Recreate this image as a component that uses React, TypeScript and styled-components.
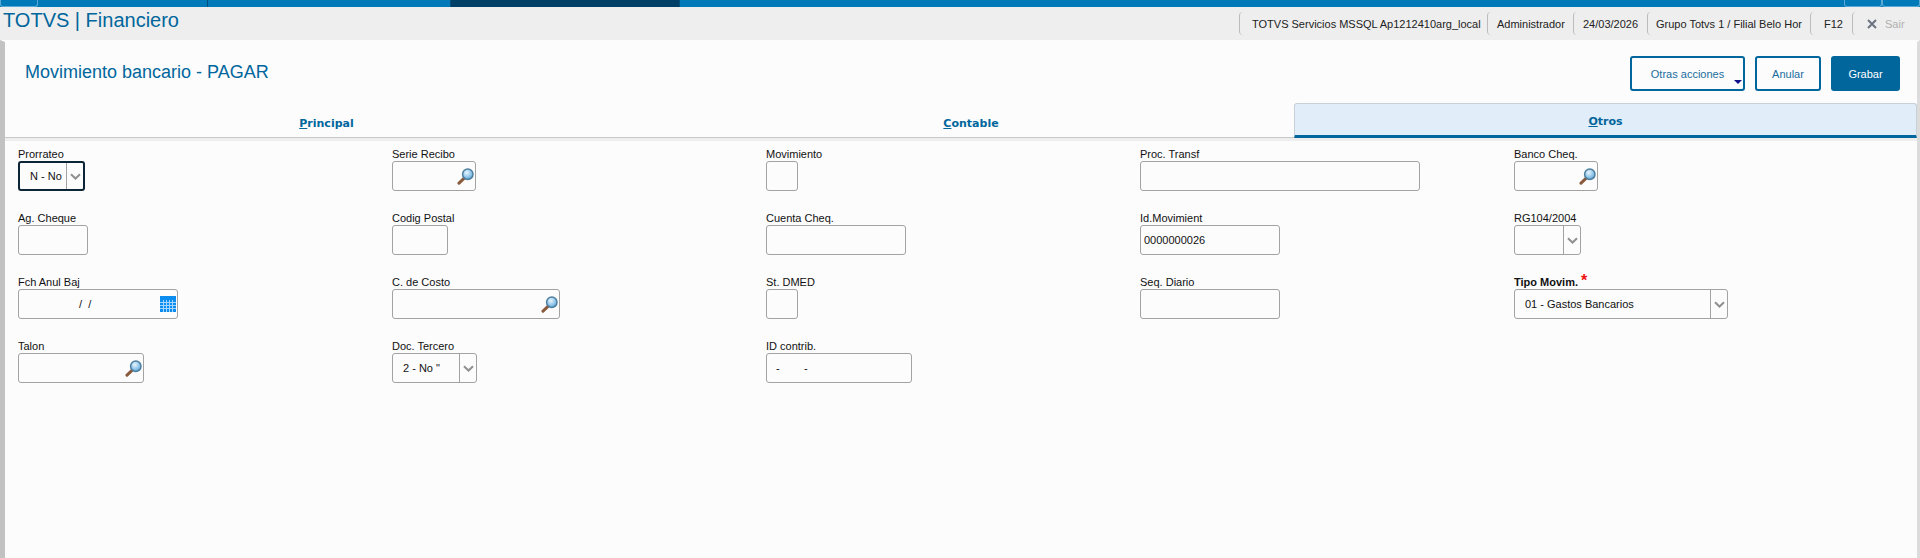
import styled, { createGlobalStyle } from "styled-components";

const GlobalStyle = createGlobalStyle`
  html, body {
    margin: 0;
    padding: 0;
    height: 100%;
    background: #eeeeee;
    font-family: "Liberation Sans", Arial, sans-serif;
    overflow: hidden;
  }
  #root { height: 100%; }
`;

const Page = styled.div`
  display: flex;
  flex-direction: column;
  height: 100%;
`;

const TopBar = styled.div`
  display: flex;
  height: 7px;
  flex-shrink: 0;
  background: #0079b8;
`;

const TopTab = styled.div<{ $width: number; $dark?: boolean; $light?: boolean }>`
  box-sizing: border-box;
  width: ${(p) => p.$width}px;
  background: ${(p) => (p.$dark ? "#003f66" : "#0079b8")};
  border-right: 1px solid ${(p) => (p.$light ? "#5aa9d6" : "#004f7c")};
  ${(p) => p.$light && "border-left: 1px solid #5aa9d6; border-bottom: 1px solid #5aa9d6; border-radius: 0 0 3px 3px;"}
`;

const TopSpacer = styled.div`
  flex: 1;
`;

const Header = styled.header`
  display: flex;
  justify-content: space-between;
  height: 33px;
  flex-shrink: 0;
  padding-left: 3px;
  background: #eeeeee;
`;

const Brand = styled.div`
  margin-top: 1px;
  font-size: 20px;
  line-height: 24px;
  color: #00669c;
`;

const Session = styled.div`
  display: flex;
  height: 23px;
  margin-top: 5px;
`;

const SessionItem = styled.div<{ $width: number; $pad: number }>`
  box-sizing: border-box;
  display: flex;
  align-items: center;
  width: ${(p) => p.$width}px;
  padding-left: ${(p) => p.$pad}px;
  border-left: 1px solid #bbbbbb;
  border-radius: 4px 0 0 4px;
  font-size: 11px;
  color: #222222;
  white-space: nowrap;
`;

const SairText = styled.span`
  margin-left: 8px;
  color: #b0b0b0;
`;

const Panel = styled.main`
  flex: 1;
  display: flex;
  flex-direction: column;
  background: #fcfcfc;
  border-top: 2px solid #fcfcfc;
  border-left: 5px solid #c2c2c2;
  border-right: 3px solid #dcdcdc;
`;

const TitleRow = styled.div`
  display: flex;
  justify-content: space-between;
  height: 61px;
  flex-shrink: 0;
  padding: 14px 17px 0 20px;
  box-sizing: border-box;
`;

const Title = styled.h1`
  margin: 5px 0 0;
  font-size: 18px;
  line-height: 22px;
  font-weight: 400;
  color: #00669c;
`;

const Actions = styled.div`
  display: flex;
  gap: 10px;
`;

const ActionButton = styled.button<{ $width: number; $primary?: boolean }>`
  position: relative;
  box-sizing: border-box;
  width: ${(p) => p.$width}px;
  height: 35px;
  padding: 0;
  border: 2px solid #00669c;
  border-radius: 3px;
  background: ${(p) => (p.$primary ? "#00669c" : "#fcfcfc")};
  color: ${(p) => (p.$primary ? "#ffffff" : "#1a6d9e")};
  font-family: "Liberation Sans", Arial, sans-serif;
  font-size: 11px;
`;

const Caret = styled.span`
  position: absolute;
  right: 1px;
  bottom: 5px;
  width: 0;
  height: 0;
  border-left: 4px solid transparent;
  border-right: 4px solid transparent;
  border-top: 4px solid #10108a;
`;

const Tabs = styled.nav`
  display: flex;
  height: 35px;
  flex-shrink: 0;
  box-sizing: border-box;
  border-bottom: 1px solid #c8c8c8;
`;

const Tab = styled.div<{ $width: number; $active?: boolean }>`
  box-sizing: border-box;
  display: flex;
  align-items: center;
  justify-content: center;
  width: ${(p) => p.$width}px;
  padding-top: ${(p) => (p.$active ? 4 : 7)}px;
  font-family: "DejaVu Sans", Verdana, sans-serif;
  font-size: 11px;
  font-weight: 700;
  color: #00669c;
  ${(p) =>
    p.$active &&
    `
    height: 35px;
    background: #e1edf9;
    border: 1px solid #c8d0d8;
    border-bottom: 3px solid #00669c;
    border-radius: 3px 3px 0 0;
  `}
`;

const FormStrip = styled.div`
  height: 3px;
  flex-shrink: 0;
  background: #eeeeee;
`;

const Form = styled.section`
  display: grid;
  grid-template-columns: repeat(5, 374px);
  grid-auto-rows: 44px;
  row-gap: 20px;
  padding: 6px 0 0 13px;
`;

const Field = styled.div`
  display: flex;
  flex-direction: column;
`;

const Label = styled.label<{ $required?: boolean }>`
  height: 14px;
  font-size: 11px;
  line-height: 14px;
  color: #111111;
  font-weight: ${(p) => (p.$required ? 700 : 400)};
  white-space: nowrap;
`;

const Star = styled.span`
  margin-left: 3px;
  font-size: 16px;
  line-height: 10px;
  font-weight: 700;
  color: #f01010;
`;

const Box = styled.div<{ $width: number; $focus?: boolean }>`
  box-sizing: border-box;
  display: flex;
  align-items: center;
  justify-content: space-between;
  width: ${(p) => p.$width}px;
  height: 30px;
  border: ${(p) => (p.$focus ? "2px solid #0b2536" : "1px solid #a3a3a3")};
  border-radius: 3px;
  background: #fcfcfc;
  font-size: 11px;
  color: #111111;
`;

const Value = styled.span<{ $pad: number }>`
  padding-left: ${(p) => p.$pad}px;
  white-space: pre;
`;

const ArrowCell = styled.span`
  box-sizing: border-box;
  display: flex;
  align-items: center;
  justify-content: center;
  flex-shrink: 0;
  width: 17px;
  height: 100%;
  border-left: 1px solid #a3a3a3;
`;

const IconSlot = styled.span`
  display: flex;
  margin-right: 1px;
`;

const Chevron = () => (
  <svg width="11" height="7" viewBox="0 0 11 7">
    <path d="M1 1.2 L5.5 5.5 L10 1.2" fill="none" stroke="#909090" strokeWidth="2" />
  </svg>
);

const Magnifier = () => (
  <svg width="17" height="17" viewBox="0 0 17 17">
    <defs>
      <radialGradient id="lens" cx="0.4" cy="0.35" r="0.7">
        <stop offset="0" stopColor="#e8f6ff" />
        <stop offset="1" stopColor="#5aa6dc" />
      </radialGradient>
    </defs>
    <path d="M7 10.4 L2 15.2" stroke="#8a5a3c" strokeWidth="3" strokeLinecap="round" />
    <circle cx="10.8" cy="6.2" r="5.2" fill="url(#lens)" stroke="#4f7f9f" strokeWidth="1.5" />
  </svg>
);

const Calendar = () => (
  <svg width="16" height="16" viewBox="0 0 16 16">
    <rect width="16" height="16" fill="#0a8cf0" />
    <path
      d="M0 6.5H16M0 9.5H16M0 12.5H16M3.5 4V16M6.5 4V16M9.5 4V16M12.5 4V16"
      stroke="#a8d6fa"
      strokeWidth="1"
    />
  </svg>
);

const CloseMark = () => (
  <svg width="10" height="10" viewBox="0 0 10 10">
    <path d="M1 1 L9 9 M9 1 L1 9" stroke="#6a7480" strokeWidth="2" />
  </svg>
);

type FieldKind = "text" | "search" | "select" | "date";

interface FieldDef {
  label: string;
  width: number;
  kind?: FieldKind;
  value?: string;
  pad?: number;
  focus?: boolean;
  required?: boolean;
}

const fields: FieldDef[] = [
  { label: "Prorrateo", width: 67, kind: "select", value: "N - No", focus: true },
  { label: "Serie Recibo", width: 84, kind: "search" },
  { label: "Movimiento", width: 32 },
  { label: "Proc. Transf", width: 280 },
  { label: "Banco Cheq.", width: 84, kind: "search" },

  { label: "Ag. Cheque", width: 70 },
  { label: "Codig Postal", width: 56 },
  { label: "Cuenta Cheq.", width: 140 },
  { label: "Id.Movimient", width: 140, value: "0000000026", pad: 3 },
  { label: "RG104/2004", width: 67, kind: "select" },

  { label: "Fch Anul Baj", width: 160, kind: "date", value: "/  /", pad: 60 },
  { label: "C. de Costo", width: 168, kind: "search" },
  { label: "St. DMED", width: 32 },
  { label: "Seq. Diario", width: 140 },
  { label: "Tipo Movim.", width: 214, kind: "select", value: "01 - Gastos Bancarios", required: true },

  { label: "Talon", width: 126, kind: "search" },
  { label: "Doc. Tercero", width: 85, kind: "select", value: '2 - No "' },
  { label: "ID contrib.", width: 146, value: "-        -", pad: 9 },
];

const FormField = ({ label, width, kind = "text", value, pad = 10, focus, required }: FieldDef) => (
  <Field>
    <Label $required={required}>
      {label}
      {required && <Star>*</Star>}
    </Label>
    <Box $width={width} $focus={focus}>
      <Value $pad={pad}>{value}</Value>
      {kind === "select" && (
        <ArrowCell>
          <Chevron />
        </ArrowCell>
      )}
      {kind === "search" && (
        <IconSlot>
          <Magnifier />
        </IconSlot>
      )}
      {kind === "date" && (
        <IconSlot>
          <Calendar />
        </IconSlot>
      )}
    </Box>
  </Field>
);

export default function App() {
  return (
    <Page>
      <GlobalStyle />
      <TopBar>
        <TopTab $width={38} $light />
        <TopTab $width={170} />
        <TopTab $width={243} />
        <TopTab $width={229} $dark />
        <TopSpacer />
        <TopTab $width={38} $light />
        <TopTab $width={38} $light />
      </TopBar>
      <Header>
        <Brand>TOTVS | Financiero</Brand>
        <Session>
          <SessionItem $width={248} $pad={12}>TOTVS Servicios MSSQL Ap1212410arg_local</SessionItem>
          <SessionItem $width={86} $pad={9}>Administrador</SessionItem>
          <SessionItem $width={74} $pad={9}>24/03/2026</SessionItem>
          <SessionItem $width={163} $pad={8}>Grupo Totvs 1 / Filial Belo Hor</SessionItem>
          <SessionItem $width={42} $pad={13}>F12</SessionItem>
          <SessionItem $width={68} $pad={14}>
            <CloseMark />
            <SairText>Sair</SairText>
          </SessionItem>
        </Session>
      </Header>
      <Panel>
        <TitleRow>
          <Title>Movimiento bancario - PAGAR</Title>
          <Actions>
            <ActionButton $width={115}>
              Otras acciones
              <Caret />
            </ActionButton>
            <ActionButton $width={66}>Anular</ActionButton>
            <ActionButton $width={69} $primary>Grabar</ActionButton>
          </Actions>
        </TitleRow>
        <Tabs>
          <Tab $width={643}><span><u>P</u>rincipal</span></Tab>
          <Tab $width={646}><span><u>C</u>ontable</span></Tab>
          <Tab $width={623} $active><span><u>O</u>tros</span></Tab>
        </Tabs>
        <FormStrip />
        <Form>
          {fields.map((f) => (
            <FormField key={f.label} {...f} />
          ))}
        </Form>
      </Panel>
    </Page>
  );
}
